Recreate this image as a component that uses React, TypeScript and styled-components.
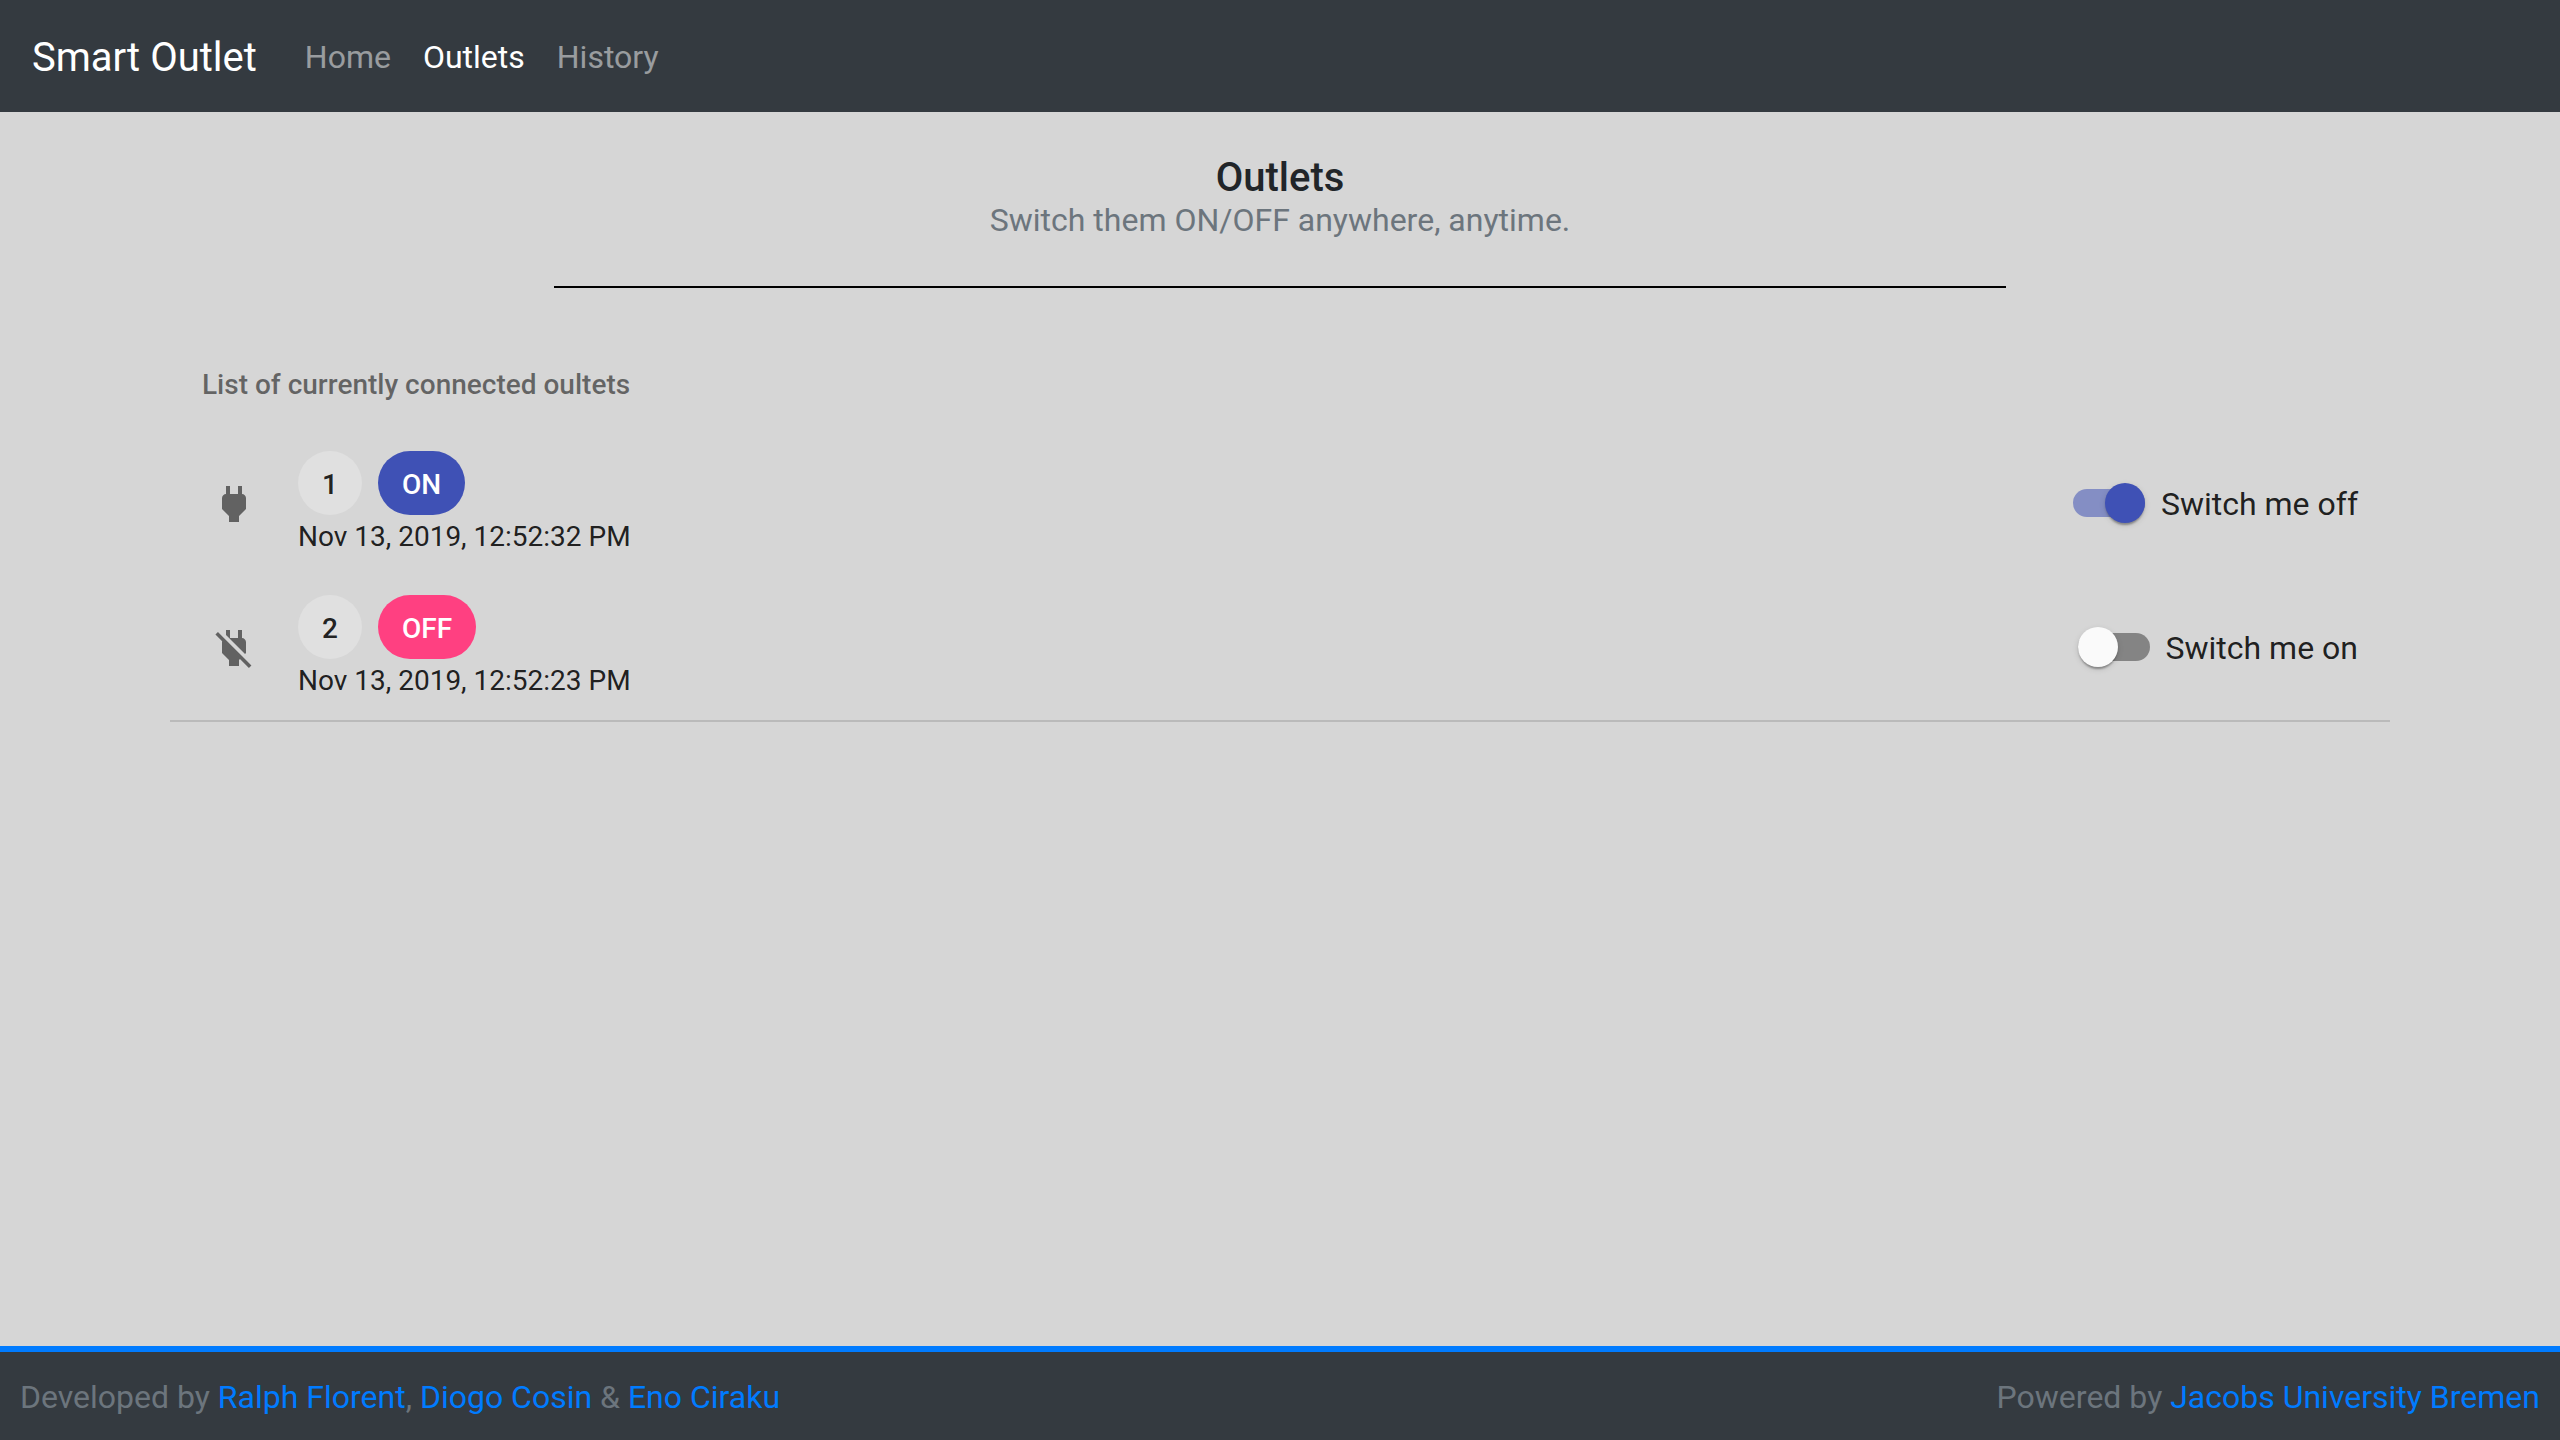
import React from 'react';
import styled, { createGlobalStyle } from 'styled-components';

const GlobalStyle = createGlobalStyle`
  *, *::before, *::after { box-sizing: border-box; }
  html, body { margin: 0; height: 100%; }
  body {
    background: #d6d6d6;
    color: #212529;
    font-family: Roboto, "Liberation Sans", sans-serif;
    font-size: 32px;
    line-height: 1.5;
  }
  #root { height: 100%; }
`;

const Page = styled.div`
  display: flex;
  flex-direction: column;
  min-height: 100vh;
`;

const Navbar = styled.nav`
  display: flex;
  align-items: center;
  height: 112px;
  padding: 18px 32px 16px;
  background: #343a40;
`;

const Brand = styled.a`
  margin-right: 32px;
  color: #fff;
  font-size: 40px;
  line-height: 61px;
  white-space: nowrap;
`;

const NavLink = styled.a<{ $active?: boolean }>`
  padding: 16px;
  color: ${(p) => (p.$active ? '#fff' : 'rgba(255, 255, 255, 0.5)')};
`;

const Main = styled.main`
  flex: 1;
  width: 2220px;
  margin: 0 auto;
`;

const Header = styled.header`
  display: flex;
  flex-direction: column;
  align-items: center;
  width: 1452px;
  margin: 0 auto;
  padding: 42px 0 48px;
  border-bottom: 2px solid #000;
`;

const Title = styled.h1`
  margin: 0;
  font-size: 40px;
  font-weight: 500;
  line-height: 48px;
`;

const Subtitle = styled.p`
  margin: 0;
  color: #6c757d;
  line-height: 36px;
`;

const List = styled.section`
  margin-top: 48px;
  border-bottom: 2px solid #bababa;
  color: rgba(0, 0, 0, 0.87);
`;

const ListHeading = styled.h3`
  height: 96px;
  margin: 0;
  padding: 32px 32px 0;
  color: rgba(0, 0, 0, 0.54);
  font-size: 28px;
  font-weight: 500;
  line-height: 33px;
`;

const Row = styled.div`
  display: flex;
  align-items: center;
  height: 144px;
  padding: 0 32px;
`;

const RowIcon = styled.svg`
  width: 64px;
  height: 64px;
  padding: 8px;
  fill: rgba(0, 0, 0, 0.54);
`;

const RowText = styled.div`
  flex: 1;
  padding-left: 32px;
`;

const Chips = styled.div`
  display: flex;
  gap: 16px;
`;

type Tone = 'plain' | 'primary' | 'accent';
const toneFill = { plain: '#e0e0e0', primary: '#3f51b5', accent: '#ff4081' };

const Chip = styled.span<{ $tone: Tone }>`
  height: 64px;
  padding: 0 24px;
  border-radius: 32px;
  background: ${(p) => toneFill[p.$tone]};
  color: ${(p) => (p.$tone === 'plain' ? 'rgba(0, 0, 0, 0.87)' : '#fff')};
  font-size: 28px;
  font-weight: 500;
  line-height: 67px;
`;

const Stamp = styled.div`
  height: 42px;
  font-size: 28px;
  line-height: 43px;
`;

const Toggle = styled.label`
  display: flex;
  align-items: center;
  gap: 16px;
  line-height: 48px;
`;

const Track = styled.span<{ $on: boolean }>`
  display: flex;
  align-items: center;
  justify-content: ${(p) => (p.$on ? 'flex-end' : 'flex-start')};
  width: 72px;
  height: 28px;
  margin-bottom: 2px;
  border-radius: 16px;
  background: ${(p) => (p.$on ? 'rgba(63, 81, 181, 0.54)' : 'rgba(0, 0, 0, 0.38)')};
`;

const Thumb = styled.span<{ $on: boolean }>`
  flex: none;
  width: 40px;
  height: 40px;
  border-radius: 50%;
  background: ${(p) => (p.$on ? '#3f51b5' : '#fafafa')};
  box-shadow: 0 4px 2px -2px rgba(0, 0, 0, 0.2), 0 2px 2px 0 rgba(0, 0, 0, 0.14),
    0 2px 6px 0 rgba(0, 0, 0, 0.12);
`;

const Footer = styled.footer`
  display: flex;
  justify-content: space-between;
  height: 94px;
  padding: 21px 20px 0;
  border-top: 6px solid #007bff;
  background: #343a40;
  color: #6c757d;
`;

const Link = styled.a`
  color: #007bff;
`;

const plugOn =
  'M16.01 7L16 3h-2v4h-4V3H8v4h-.01C7 6.99 6 7.99 6 8.99v5.49L9.5 18v3h5v-3l3.5-3.51v-5.5c0-1-1-2-1.99-1.99z';
const plugOff =
  'M18 14.49V9c0-1-1.01-2.01-2-2V3h-2v4h-4V3H8v2.48l9.51 9.5.49-.49zm-1.76 1.77L7.2 7.2l-.01.01L3.98 4 2.71 5.25l3.36 3.36C6.04 8.74 6 8.87 6 9v5.48L9.5 18v3h5v-3l.48-.48L19.45 22l1.26-1.28-4.47-4.46z';

const outlets = [
  { id: 1, on: true, stamp: 'Nov 13, 2019, 12:52:32 PM' },
  { id: 2, on: false, stamp: 'Nov 13, 2019, 12:52:23 PM' },
];

export default function App() {
  return (
    <Page>
      <GlobalStyle />
      <Navbar>
        <Brand>Smart Outlet</Brand>
        <NavLink>Home</NavLink>
        <NavLink $active>Outlets</NavLink>
        <NavLink>History</NavLink>
      </Navbar>
      <Main>
        <Header>
          <Title>Outlets</Title>
          <Subtitle>Switch them ON/OFF anywhere, anytime.</Subtitle>
        </Header>
        <List>
          <ListHeading>List of currently connected oultets</ListHeading>
          {outlets.map((o) => (
            <Row key={o.id}>
              <RowIcon viewBox="0 0 24 24">
                <path d={o.on ? plugOn : plugOff} />
              </RowIcon>
              <RowText>
                <Chips>
                  <Chip $tone="plain">{o.id}</Chip>
                  <Chip $tone={o.on ? 'primary' : 'accent'}>{o.on ? 'ON' : 'OFF'}</Chip>
                </Chips>
                <Stamp>{o.stamp}</Stamp>
              </RowText>
              <Toggle>
                <Track $on={o.on}>
                  <Thumb $on={o.on} />
                </Track>
                <span>Switch me {o.on ? 'off' : 'on'}</span>
              </Toggle>
            </Row>
          ))}
        </List>
      </Main>
      <Footer>
        <span>
          Developed by <Link>Ralph Florent</Link>, <Link>Diogo Cosin</Link> &amp; <Link>Eno Ciraku</Link>
        </span>
        <span>
          Powered by <Link>Jacobs University Bremen</Link>
        </span>
      </Footer>
    </Page>
  );
}
